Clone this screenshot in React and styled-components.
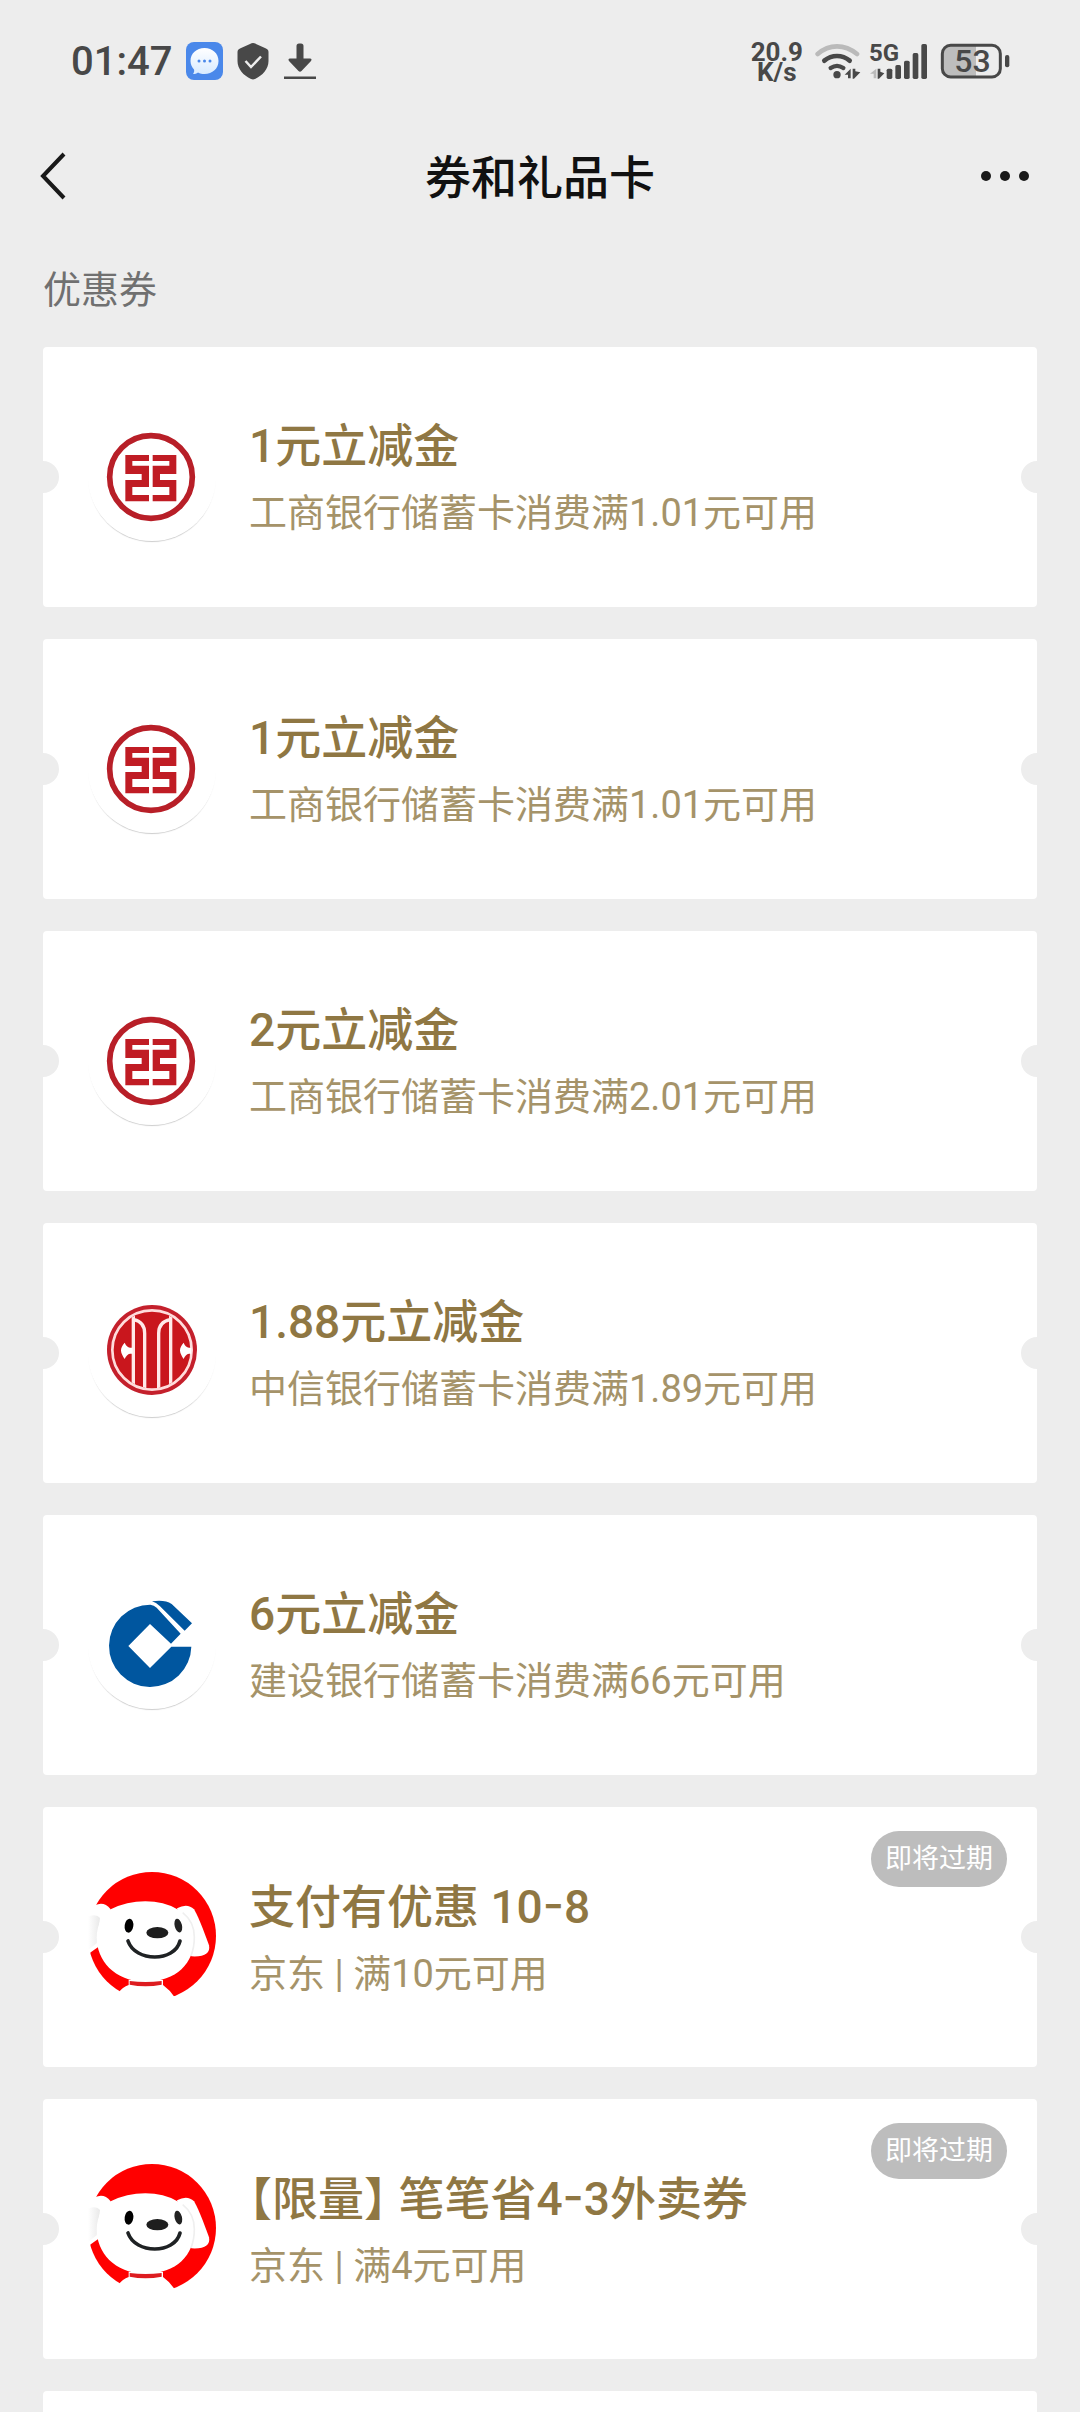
import React from "react";
import styled, { createGlobalStyle } from "styled-components";

const GlobalStyle = createGlobalStyle`
  * { box-sizing: border-box; }
  body {
    margin: 0;
    background: #ededed;
    font-family: Roboto, "Noto Sans CJK SC", sans-serif;
  }
`;

const Page = styled.div`
  height: 100vh;
  display: flex;
  flex-direction: column;
  overflow: hidden;
`;

/* ---------- status bar ---------- */

const StatusBar = styled.header`
  flex: none;
  height: 122px;
  padding: 0 70px 0 71px;
  display: flex;
  align-items: center;
  justify-content: space-between;
  color: #484848;
`;

const StatusGroup = styled.div`
  display: flex;
  align-items: center;
  gap: ${(p) => p.$gap}px;
`;

const Time = styled.time`
  padding-top: 2px;
  font-size: 40px;
  line-height: 48px;
  font-weight: 500;
`;

const NetSpeed = styled.div`
  margin-right: 4px;
  padding-top: 2px;
  font-size: 26px;
  line-height: 20px;
  font-weight: 700;
  text-align: center;
`;

const SignalBox = styled.div`
  position: relative;
  display: flex;
`;

const SignalLabel = styled.span`
  position: absolute;
  top: 0;
  left: 0;
  font-size: 24px;
  line-height: 20px;
  font-weight: 700;
`;

const BatteryBox = styled.div`
  position: relative;
  display: flex;
  margin-left: 4px;
`;

const BatteryLevel = styled.span`
  position: absolute;
  inset: 0 5px 0 0;
  display: flex;
  align-items: center;
  justify-content: center;
  font-size: 32px;
  line-height: 36px;
  font-weight: 500;
`;

const MessageIcon = () => (
  <svg width="37" height="38" viewBox="0 0 37 38" aria-hidden="true">
    <defs>
      <linearGradient id="bubble" x1="0" y1="0" x2="0" y2="1">
        <stop offset="0" stopColor="#ffffff" />
        <stop offset="1" stopColor="#d8ebff" />
      </linearGradient>
    </defs>
    <rect width="37" height="38" rx="8" fill="#4a88ea" />
    <path
      d="M18.500 6C26.500 6 32.500 11.500 32.500 19S26.500 32 18.500 32c-2.500 0-4.500-.5-6.500-1.500-1.500 1-3 1.500-5 1.500 1-1.500 1.500-3 1-4.500C6 25.500 4.500 22.500 4.500 19 4.500 11.500 10.500 6 18.500 6z"
      fill="url(#bubble)"
    />
    <circle cx="13" cy="19" r="1.500" fill="#4a88ea" />
    <circle cx="18.500" cy="19" r="1.500" fill="#4a88ea" />
    <circle cx="24" cy="19" r="1.500" fill="#4a88ea" />
  </svg>
);

const ShieldIcon = () => (
  <svg width="32" height="38" viewBox="0 0 32 38" aria-hidden="true">
    <path
      d="M16 1c1 0 2 .4 3 .9l9.500 4.300C30.500 7.100 31.500 8 31.500 10v9c0 8-6 14.500-13.500 18-1.500.6-2.500.6-4 0C6.500 33.500.5 27 .5 19v-9c0-2 1-2.900 3-3.800L13 1.900c1-.5 2-.9 3-.9z"
      fill="#484848"
    />
    <path d="M8.500 19l5.500 6L24 14.500" fill="none" stroke="#ededed" strokeWidth="2.500" />
  </svg>
);

const DownloadIcon = () => (
  <svg width="34" height="38" viewBox="0 0 34 38" aria-hidden="true">
    <path
      d="M13.500 4q0-2.500 2.500-2.500h2q2.500 0 2.500 2.500v12.500h6.500q2.500.5 1 2.500l-9.500 10q-1.500 1.500-3 0L6 19q-1.500-2 1-2.500h6.500z"
      fill="#484848"
    />
    <rect x="1" y="34.500" width="32" height="2.500" fill="#484848" />
  </svg>
);

const WifiIcon = () => (
  <svg width="46" height="36" viewBox="210 24 138 108" role="img" aria-label="Wi-Fi">
    <g fill="none" strokeLinecap="round">
      <path d="M218 57Q244 34 276 34T336 57" stroke="#bababa" strokeWidth="14" />
      <path d="M238 77Q255 63 276 63T314 77" stroke="#484848" strokeWidth="14" />
      <path d="M257 99Q276 86 295 99" stroke="#484848" strokeWidth="13" />
    </g>
    <circle cx="276" cy="119" r="11" fill="#484848" />
    <path d="M299 119L317 101V130H309V119z" fill="#484848" />
    <path d="M323 101H331V109L346 112L327 131H323z" fill="#484848" />
  </svg>
);

const SignalIcon = () => (
  <svg width="59" height="36" viewBox="372 24 177 108" aria-hidden="true">
    <path d="M375 116L394 101V130H386V116z" fill="#bababa" />
    <path d="M398 101H406V110L418 115L402 131H398z" fill="#484848" />
    <g fill="#484848">
      <rect x="425" y="101" width="17" height="31" rx="5" />
      <rect x="451" y="90" width="17" height="42" rx="5" />
      <rect x="477" y="77" width="17" height="55" rx="5" />
      <rect x="503" y="54" width="17" height="78" rx="5" />
      <rect x="529" y="27" width="17" height="105" rx="5" />
    </g>
  </svg>
);

const BatteryIcon = () => (
  <svg width="70" height="36" viewBox="585 24 210 108" aria-hidden="true">
    <path d="M693 31H617Q592 31 592 56V101Q592 126 617 126H693z" fill="#bdbdbd" />
    <rect x="592" y="31" width="174" height="95" rx="25" fill="none" stroke="#484848" strokeWidth="9" />
    <rect x="780" y="60" width="13" height="37" rx="6" fill="#484848" />
  </svg>
);

/* ---------- navigation ---------- */

const NavBar = styled.nav`
  flex: none;
  height: 108px;
  padding: 0 36px;
  display: grid;
  grid-template-columns: 64px 1fr 64px;
  align-items: center;
`;

const IconButton = styled.button`
  display: flex;
  align-items: center;
  justify-content: ${(p) => p.$align};
  width: 64px;
  height: 64px;
  padding: 0;
  border: 0;
  background: none;
  color: #191919;
`;

const Title = styled.h1`
  margin: 0;
  padding-top: 3px;
  text-align: center;
  font-size: 46px;
  line-height: 64px;
  font-weight: 500;
  color: #111111;
`;

/* ---------- coupons ---------- */

const Section = styled.section`
  flex: 1;
  min-height: 0;
  padding: 0 43px;
  overflow: hidden;
`;

const SectionTitle = styled.h2`
  margin: 0;
  padding-top: 3px;
  font-size: 38px;
  line-height: 114px;
  font-weight: 400;
  color: #707070;
`;

const CouponList = styled.ul`
  list-style: none;
  margin: 0;
  padding: 0;
  display: flex;
  flex-direction: column;
  gap: 32px;
`;

const CouponCard = styled.li`
  position: relative;
  min-height: 260px;
  padding: 0 45px;
  display: flex;
  align-items: center;
  gap: 33px;
  overflow: hidden;
  border-radius: 4px;
  background: #ffffff;

  &::before,
  &::after {
    content: "";
    position: absolute;
    top: 114px;
    width: 32px;
    height: 32px;
    border-radius: 50%;
    background: #ededed;
  }
  &::before { left: -16px; }
  &::after { right: -16px; }
`;

const Logo = styled.div`
  flex: none;
  width: 128px;
  height: 128px;
  border-radius: 50%;
  box-shadow: ${(p) => (p.$raised ? "0 2px 1px -1px rgba(0, 0, 0, 0.2)" : "none")};

  svg {
    display: block;
    overflow: visible;
  }
`;

const CouponText = styled.div`
  display: flex;
  flex-direction: column;
  gap: 6px;
`;

const CouponName = styled.h3`
  margin: 0;
  font-size: 46px;
  line-height: 66px;
  font-weight: 500;
  font-feature-settings: "halt";
  color: #8f7743;
`;

const Dash = styled.span`
  font-family: Inter, sans-serif;
  font-feature-settings: "case";
`;

const CouponRule = styled.p`
  margin: 0;
  font-size: 38px;
  line-height: 56px;
  color: #a59369;
`;

const Badge = styled.span`
  position: absolute;
  top: 24px;
  right: 30px;
  padding: 0 14px;
  border-radius: 28px;
  font-size: 27px;
  line-height: 56px;
  color: #ffffff;
  background: #bdbdbd;
`;

const IcbcLogo = () => (
  <svg width="128" height="128" viewBox="-51 -51 384 384" role="img" aria-label="工商银行">
    <circle cx="138" cy="141" r="124" fill="none" stroke="#b81f28" strokeWidth="17" />
    <g fill="#c01c24">
      <path d="M61 75H132V93H82V107H132V171H82V195H132V214H61V150H110V132H61z" />
      <path d="M143 75H214V132H165V150H214V214H143V195H193V171H143V107H193V93H143z" />
    </g>
  </svg>
);

const CiticLogo = () => (
  <svg width="128" height="128" viewBox="54 27 384 384" role="img" aria-label="中信银行">
    <defs>
      <clipPath id="citicDisc">
        <circle cx="246" cy="210" r="115" />
      </clipPath>
    </defs>
    <circle cx="246" cy="210" r="135" fill="#c4202c" />
    <circle cx="246" cy="210" r="119" fill="#c9161d" stroke="#ffdcdc" strokeWidth="8" />
    <g clipPath="url(#citicDisc)" fill="none" stroke="#ffe9e9" strokeWidth="10">
      <path d="M190 95V330M302 95V330" />
      <path d="M192 119Q224 126 224 160V335M300 119Q266 126 266 160V335" />
    </g>
    <path d="M188 203H180Q170 202 164 188Q153 200 153 211T164 237Q170 223 180 221H188z" fill="#ffffff" />
    <path d="M364 203H357Q346 202 341 188Q330 200 330 211T341 237Q346 223 357 221H364z" fill="#ffffff" />
  </svg>
);

const CcbLogo = () => (
  <svg width="128" height="128" viewBox="54 33 384 384" role="img" aria-label="建设银行">
    <path
      fill="#00569f"
      fillRule="evenodd"
      d="M241 104Q252 106 260 113L332 191L303 221L240 162L175 228L240 294L304 230H364A123.500 123.500 0 1 1 241 104z"
    />
    <path fill="#00569f" d="M246 94Q284 88 305 102L366 160L344 182L270 109Q258 97 246 94z" />
  </svg>
);

const JdLogo = () => (
  <svg width="128" height="128" viewBox="54 69 384 384" role="img" aria-label="京东">
    <defs>
      <linearGradient id="earShade" x1="0" y1="0" x2="1" y2="0">
        <stop offset="0" stopColor="#ffffff" />
        <stop offset="1" stopColor="#e9e9e9" />
      </linearGradient>
    </defs>
    <circle cx="246" cy="258" r="192" fill="#ff0000" />
    <path d="M40 180Q70 165 88 162T122 178L92 286L56 311H30z" fill="#ffffff" />
    <path d="M54 200Q80 190 90 204L80 280L54 300z" fill="url(#earShade)" />
    <path d="M321 175Q352 158 372 178Q386 200 417 286Q424 322 365 319z" fill="#ffffff" />
    <path d="M144 430Q158 410 176 405V390H279V405Q300 420 314 442V470H144z" fill="#ffffff" />
    <path
      d="M122 178Q170 154 226 154T322 178Q372 205 373 262C373 340 320 395 226 395S80 330 80 262Q82 205 122 178z"
      fill="#ffffff"
    />
    <path d="M338 188Q373 215 373 262Q373 292 363 318" fill="none" stroke="#efefef" strokeWidth="5" />
    <path d="M179 393Q226 399 275 393V404Q226 414 179 404z" fill="#dd1c20" />
    <ellipse cx="177" cy="227" rx="13" ry="21" fill="#000000" transform="rotate(8 177 227)" />
    <ellipse cx="325" cy="227" rx="11" ry="21" fill="#222222" transform="rotate(-14 325 227)" />
    <ellipse cx="262" cy="248" rx="33" ry="17" fill="#1e1e1e" />
    <path d="M174 273C196 337 314 337 330 273" fill="none" stroke="#1f2224" strokeWidth="11" strokeLinecap="round" />
  </svg>
);

const issuers = {
  icbc: { mark: <IcbcLogo />, raised: true },
  citic: { mark: <CiticLogo />, raised: true },
  ccb: { mark: <CcbLogo />, raised: true },
  jd: { mark: <JdLogo />, raised: false },
};

const coupons = [
  { issuer: "icbc", name: "1元立减金", rule: "工商银行储蓄卡消费满1.01元可用" },
  { issuer: "icbc", name: "1元立减金", rule: "工商银行储蓄卡消费满1.01元可用" },
  { issuer: "icbc", name: "2元立减金", rule: "工商银行储蓄卡消费满2.01元可用" },
  { issuer: "citic", name: "1.88元立减金", rule: "中信银行储蓄卡消费满1.89元可用" },
  { issuer: "ccb", name: "6元立减金", rule: "建设银行储蓄卡消费满66元可用" },
  {
    issuer: "jd",
    name: <>支付有优惠 10<Dash>-</Dash>8</>,
    rule: "京东 | 满10元可用",
    expiring: true,
  },
  {
    issuer: "jd",
    name: <>【限量】 笔笔省4<Dash>-</Dash>3外卖券</>,
    rule: "京东 | 满4元可用",
    expiring: true,
  },
];

function Coupon({ issuer, name, rule, expiring }) {
  const { mark, raised } = issuers[issuer];
  return (
    <CouponCard>
      <Logo $raised={raised}>{mark}</Logo>
      <CouponText>
        <CouponName>{name}</CouponName>
        <CouponRule>{rule}</CouponRule>
      </CouponText>
      {expiring && <Badge>即将过期</Badge>}
    </CouponCard>
  );
}

export default function App() {
  return (
    <Page>
      <GlobalStyle />
      <StatusBar>
        <StatusGroup $gap={14}>
          <Time>01:47</Time>
          <MessageIcon />
          <ShieldIcon />
          <DownloadIcon />
        </StatusGroup>
        <StatusGroup $gap={8}>
          <NetSpeed>
            20.9
            <br />
            K/s
          </NetSpeed>
          <WifiIcon />
          <SignalBox>
            <SignalIcon />
            <SignalLabel>5G</SignalLabel>
          </SignalBox>
          <BatteryBox>
            <BatteryIcon />
            <BatteryLevel>53</BatteryLevel>
          </BatteryBox>
        </StatusGroup>
      </StatusBar>

      <NavBar>
        <IconButton $align="flex-start" type="button" aria-label="返回">
          <svg width="32" height="50" viewBox="0 0 32 50" aria-hidden="true">
            <path d="M28 3L7 25L28 47" fill="none" stroke="currentColor" strokeWidth="4" />
          </svg>
        </IconButton>
        <Title>券和礼品卡</Title>
        <IconButton $align="flex-end" type="button" aria-label="更多">
          <svg width="64" height="12" viewBox="0 0 64 12" aria-hidden="true">
            <circle cx="6" cy="6" r="5" fill="currentColor" />
            <circle cx="25" cy="6" r="5" fill="currentColor" />
            <circle cx="44" cy="6" r="5" fill="currentColor" />
          </svg>
        </IconButton>
      </NavBar>

      <Section>
        <SectionTitle>优惠券</SectionTitle>
        <CouponList>
          {coupons.map((coupon, index) => (
            <Coupon key={index} {...coupon} />
          ))}
          <CouponCard />
        </CouponList>
      </Section>
    </Page>
  );
}
